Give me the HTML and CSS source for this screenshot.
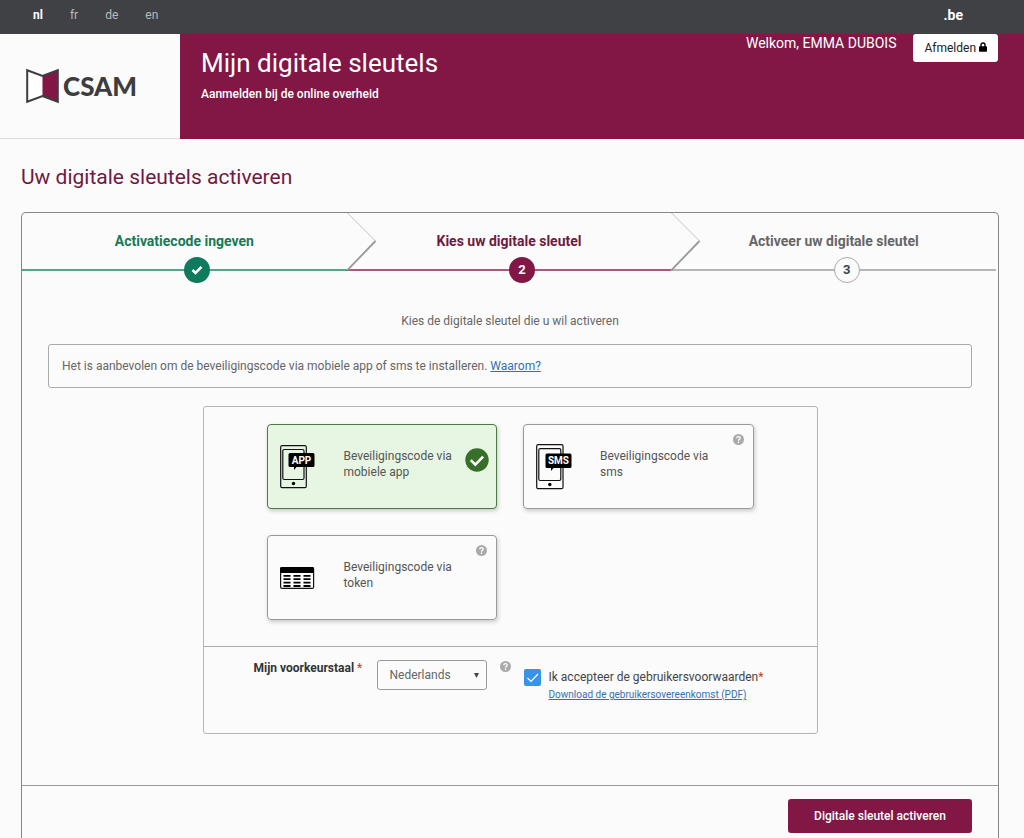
FILE: index.html
```html
<!DOCTYPE html>
<html lang="nl">
<head>
<meta charset="utf-8">
<meta name="viewport" content="width=device-width, initial-scale=1">
<title>Mijn digitale sleutels</title>
<link rel="stylesheet" href="styles.css">
</head>
<body>
<nav class="topbar">
  <div class="langs">
    <a href="#nl" class="lang lang-active">nl</a>
    <a href="#fr" class="lang">fr</a>
    <a href="#de" class="lang">de</a>
    <a href="#en" class="lang">en</a>
  </div>
  <a href="#be" class="belgium">.be</a>
</nav>
<header class="header">
  <a href="#home" class="logo">
    <svg width="33" height="36" viewBox="0 0 33 36" aria-hidden="true">
      <path d="M1.2 2.2 16.5 8v20L1.2 33.8z" fill="#fff"/>
      <path d="M31.8 2.2 16.5 8v20l15.300 5.800z" fill="#821746"/>
      <path d="M1.200 2.200 16.500 8 31.800 2.200v31.600L16.500 28 1.200 33.800z" fill="none" stroke="#3d3d3f" stroke-width="2"/>
    </svg>
    <span class="logo-name">CSAM</span>
  </a>
  <div class="banner">
    <div class="banner-text">
      <p class="banner-title">Mijn digitale sleutels</p>
      <p class="banner-sub">Aanmelden bij de online overheid</p>
    </div>
    <div class="account">
      <span class="welcome">Welkom, EMMA DUBOIS</span>
      <button type="button" class="logout">Afmelden
        <svg width="8" height="10" viewBox="0 0 8 10" aria-hidden="true"><path d="M2 5V3a2 2 0 0 1 4 0v2" fill="none" stroke="#000" stroke-width="1.400"/><rect y="4.300" width="8" height="5.400" rx=".7"/></svg>
      </button>
    </div>
  </div>
</header>
<main class="main">
  <h1 class="page-title">Uw digitale sleutels activeren</h1>
  <form class="wizard">
    <ol class="steps">
      <li class="step step-done">
        <span class="step-name">Activatiecode ingeven</span>
        <span class="badge"><svg width="12" height="10" viewBox="0 0 12 10" aria-label="Voltooid"><path d="M1.500 5 4.500 8l6-6.200" fill="none" stroke="#fff" stroke-width="2.600"/></svg></span>
        <svg class="chevron" width="31" height="58" viewBox="0 0 31 58" aria-hidden="true"><path d="M0 0h1l28 28L0 57z" fill="#fbfbfb"/><path d="M.5 0 28.500 28" stroke="#c4c4c4" fill="none"/><path d="M28.500 28 .5 57" stroke="#999" stroke-width="1.800" fill="none"/></svg>
      </li>
      <li class="step step-current">
        <span class="step-name">Kies uw digitale sleutel</span>
        <span class="badge">2</span>
        <svg class="chevron" width="31" height="58" viewBox="0 0 31 58" aria-hidden="true"><path d="M0 0h1l28 28L0 57z" fill="#fbfbfb"/><path d="M.5 0 28.500 28" stroke="#c4c4c4" fill="none"/><path d="M28.500 28 .5 57" stroke="#999" stroke-width="1.800" fill="none"/></svg>
      </li>
      <li class="step step-next">
        <span class="step-name">Activeer uw digitale sleutel</span>
        <span class="badge">3</span>
      </li>
    </ol>
    <p class="intro">Kies de digitale sleutel die u wil activeren</p>
    <p class="notice">Het is aanbevolen om de beveiligingscode via mobiele app of sms te installeren. <a href="#waarom">Waarom?</a></p>
    <div class="panel">
      <div class="options">
        <label class="option option-selected">
          <input type="radio" name="key" class="option-input" checked>
          <span class="option-icon"><svg width="36" height="44" viewBox="0 0 36 44" aria-hidden="true">
            <rect x=".7" y=".7" width="25.600" height="42" rx="1.500" fill="none" stroke="#111" stroke-width="1.200"/>
            <rect x="2.800" y="4.500" width="21.200" height="30" rx="1.500" fill="none" stroke="#111" stroke-width="1.200"/>
            <circle cx="13.500" cy="38.500" r="1.700"/>
            <path d="M10 8h23q1.500 0 1.500 1.500v11q0 1.500-1.500 1.500H16.500L14 25v-3h-4q-1.500 0-1.500-1.500v-11Q8.500 8 10 8z"/>
            <text x="21.500" y="18.500" class="icon-text">APP</text>
          </svg></span>
          <span class="option-name">Beveiligingscode via mobiele app</span>
          <svg class="option-check" width="24" height="24" viewBox="0 0 24 24" aria-hidden="true"><circle cx="12" cy="12" r="11.700" fill="#37702b"/><path d="m5.800 12.200 4.500 4.500 7.800-8" fill="none" stroke="#fff" stroke-width="2.600"/></svg>
        </label>
        <label class="option">
          <input type="radio" name="key" class="option-input">
          <span class="option-icon"><svg width="36" height="46" viewBox="0 0 36 46" aria-hidden="true">
            <rect x=".7" y=".7" width="26.300" height="44" rx="1.500" fill="none" stroke="#111" stroke-width="1.200"/>
            <rect x="2.800" y="4.700" width="22" height="31.800" rx="1.500" fill="none" stroke="#111" stroke-width="1.200"/>
            <circle cx="13.800" cy="40.500" r="1.700"/>
            <path d="M11 9.500h23q1.500 0 1.500 1.500v11.500q0 1.500-1.500 1.500H17.500L15 27v-3h-4q-1.500 0-1.500-1.500V11q0-1.500 1.500-1.500z"/>
            <text x="22.500" y="20.200" class="icon-text">SMS</text>
          </svg></span>
          <span class="option-name">Beveiligingscode via sms</span>
          <svg class="help option-help" width="11" height="11" viewBox="0 0 10 10" aria-hidden="true"><circle cx="5" cy="5" r="5" fill="#aaa"/><path d="M3.400 3.900q.1-1.500 1.600-1.500t1.600 1.300Q6.600 4.500 5.600 5 5 5.300 5 6.100M5 6.900v1.200" fill="none" stroke="#fff" stroke-width="1.200"/></svg>
        </label>
        <label class="option">
          <input type="radio" name="key" class="option-input">
          <span class="option-icon"><svg width="36" height="22" viewBox="0 0 36 22" aria-hidden="true">
            <rect x=".6" y=".6" width="33" height="20.800" rx="1.500" fill="none" stroke="#111" stroke-width="1.200"/>
            <path d="M1.500 0h31q1.500 0 1.500 1.500V6H0V1.500Q0 0 1.500 0z"/>
            <path d="M3.500 8.800h7M3.500 12.200h7M3.500 15.600h7M3.500 19h7M13.500 8.800h7M13.500 12.200h7M13.500 15.600h7M13.500 19h7M23.500 8.800h7M23.500 12.200h7M23.500 15.600h7M23.500 19h7" stroke="#000" stroke-width="1.800"/>
          </svg></span>
          <span class="option-name">Beveiligingscode via token</span>
          <svg class="help option-help" width="11" height="11" viewBox="0 0 10 10" aria-hidden="true"><circle cx="5" cy="5" r="5" fill="#aaa"/><path d="M3.400 3.900q.1-1.500 1.600-1.500t1.600 1.300Q6.600 4.500 5.600 5 5 5.300 5 6.100M5 6.900v1.200" fill="none" stroke="#fff" stroke-width="1.200"/></svg>
        </label>
      </div>
      <div class="prefs">
        <label for="lang" class="prefs-label">Mijn voorkeurstaal <span class="required">*</span></label>
        <div class="select">
          <select id="lang" class="select-input"><option>Nederlands</option><option>Français</option><option>Deutsch</option><option>English</option></select>
          <svg class="select-arrow" width="5" height="5" viewBox="0 0 5 5" aria-hidden="true"><path d="M0 0h5L2.500 5z" fill="#444"/></svg>
        </div>
        <svg class="help" width="11" height="11" viewBox="0 0 10 10" aria-hidden="true"><circle cx="5" cy="5" r="5" fill="#aaa"/><path d="M3.400 3.900q.1-1.500 1.600-1.500t1.600 1.300Q6.600 4.500 5.600 5 5 5.300 5 6.100M5 6.900v1.200" fill="none" stroke="#fff" stroke-width="1.200"/></svg>
        <div class="terms">
          <span class="check">
            <input type="checkbox" id="terms" class="check-input" checked>
            <svg class="check-mark" width="17" height="17" viewBox="0 0 17 17" aria-hidden="true"><path d="m3.500 9 3.500 3.500 7-7.500" fill="none" stroke="#fff" stroke-width="1.200"/></svg>
          </span>
          <div class="terms-text">
            <label for="terms" class="terms-label">Ik accepteer de gebruikersvoorwaarden<span class="required">*</span></label>
            <a href="#pdf" class="terms-link">Download de gebruikersovereenkomst (PDF)</a>
          </div>
        </div>
      </div>
    </div>
    <div class="actions"><button type="submit" class="submit">Digitale sleutel activeren</button></div>
  </form>
</main>
</body>
</html>
```
FILE: styles.css
```css
* { box-sizing: border-box; }

body {
  margin: 0;
  background: #fbfbfb;
  color: #555;
  font: 12px/16px Roboto, "Liberation Sans", sans-serif;
}

p, h1, ol { margin: 0; padding: 0; }
button, select { font: inherit; }
a { color: #3670b0; }
svg { flex: none; }

/* Top bar */
.topbar {
  display: flex;
  justify-content: space-between;
  align-items: center;
  height: 34px;
  padding: 0 61px 4px 33px;
  background: #404145;
}
.langs { display: flex; gap: 27px; }
.lang { color: #b9babc; text-decoration: none; }
.lang-active { color: #fff; font-weight: 700; }
.belgium { color: #fff; font-size: 14px; font-weight: 700; text-decoration: none; }

/* Header */
.header { display: flex; }
.logo {
  display: flex;
  align-items: center;
  gap: 4px;
  width: 180px;
  padding-left: 26px;
  border-bottom: 1px solid #ddd;
  color: #3d3d3f;
  text-decoration: none;
}
.logo-name { font: 900 26px/32px Lato, sans-serif; }
.banner {
  flex: 1;
  display: flex;
  justify-content: space-between;
  min-height: 105px;
  padding: 0 26px 0 21px;
  background: #821746;
  color: #fff;
}
.banner-title { padding-top: 14px; font-size: 26px; line-height: 30px; }
.banner-sub { margin-top: 8px; font-weight: 500; }
.account { display: flex; align-items: flex-start; gap: 17px; }
.welcome { font-size: 14px; line-height: 18px; }
.logout {
  height: 28px;
  padding: 0 11px;
  border: 0;
  border-radius: 3px;
  background: #fff;
  color: #222;
}

/* Wizard */
.main { padding: 22px 25px 0 21px; }
.page-title { color: #6f1a42; font-size: 21px; font-weight: 400; line-height: 32px; }
.wizard {
  margin-top: 19px;
  border: 1px solid #85858a;
  border-bottom: 0;
  border-radius: 5px 5px 0 0;
}
.steps {
  display: grid;
  grid-template-columns: repeat(3, 1fr);
  padding-right: 2px;
  list-style: none;
}
.step {
  position: relative;
  height: 58px;
  padding-top: 18px;
  border-bottom: 2px solid;
  font-size: 14px;
  line-height: 20px;
  font-weight: 700;
  text-align: center;
}
.step-done { color: #177a56; border-color: #58a38b; }
.step-current { color: #6f1a42; border-color: #a85a7c; }
.step-next { color: #666; border-color: #b5b5b5; }
.badge {
  position: absolute;
  left: 50%;
  bottom: -14px;
  display: flex;
  align-items: center;
  justify-content: center;
  width: 26px;
  height: 26px;
  border-radius: 50%;
  font-size: 13px;
}
.step-done .badge { background: #0f7a5e; }
.step-current .badge { background: #821746; color: #fff; }
.step-next .badge { background: #fbfbfb; border: 1px solid #aaa; color: #444; }
.chevron { position: absolute; left: 100%; top: 0; z-index: 1; }
.intro { padding-top: 40px; line-height: 20px; text-align: center; color: #666; }
.notice {
  margin: 13px 26px 0;
  padding: 13px;
  border: 1px solid #aaa;
  border-radius: 3px;
  color: #666;
}

/* Key choice */
.panel {
  max-width: 615px;
  margin: 18px auto 51px;
  border: 1px solid #b5b5b5;
  border-radius: 3px;
}
.options {
  display: grid;
  grid-template-columns: 1fr 1fr;
  gap: 26px;
  padding: 17px 63px 26px;
}
.option {
  position: relative;
  display: flex;
  min-height: 85px;
  padding-left: 12px;
  border: 1px solid #999;
  border-radius: 4px;
  box-shadow: 1px 2px 4px rgba(0, 0, 0, .2);
}
.option-selected { background: #e7f6e3; border-color: #4a7a42; }
.option-input { position: absolute; opacity: 0; }
.option-icon { display: flex; align-items: center; width: 64px; }
.icon-text { font: 700 10px Roboto, sans-serif; fill: #fff; text-anchor: middle; }
.option-name { width: 116px; padding-top: 23px; }
.option-check { margin: 23px 0 0 5px; }
.option-help { position: absolute; top: 9px; right: 9px; }

/* Preferences */
.prefs {
  display: flex;
  align-items: flex-start;
  min-height: 87px;
  padding: 13px 50px 0;
  border-top: 1px solid #aaa;
}
.prefs-label { flex: none; width: 123px; color: #333; font-weight: 700; }
.required { color: #c8372d; font-weight: 400; }
.select { position: relative; flex: none; width: 110px; }
.select-input {
  appearance: none;
  width: 100%;
  height: 30px;
  padding: 0 12px;
  border: 1px solid #999;
  border-radius: 3px;
  background: #fbfbfb;
  color: #666;
}
.select-arrow { position: absolute; top: 13px; right: 8px; pointer-events: none; }
.prefs > .help { margin: 1px 13px 0; }
.terms { display: flex; gap: 8px; padding-top: 9px; }
.check { position: relative; flex: none; width: 17px; height: 17px; }
.check-input {
  appearance: none;
  display: block;
  width: 17px;
  height: 17px;
  margin: 0;
  border-radius: 2px;
  background: #3b93e8;
}
.check-mark { position: absolute; inset: 0; pointer-events: none; }
.terms-text { display: flex; flex-direction: column; gap: 2px; color: #444; white-space: nowrap; }
.terms-link { font-size: 10px; }

/* Actions */
.actions {
  display: flex;
  justify-content: flex-end;
  padding: 13px 26px 5px;
  border-top: 1px solid #999;
}
.submit {
  width: 184px;
  height: 34px;
  border: 0;
  border-radius: 3px;
  background: #821746;
  color: #fff;
  font-weight: 500;
}
```
